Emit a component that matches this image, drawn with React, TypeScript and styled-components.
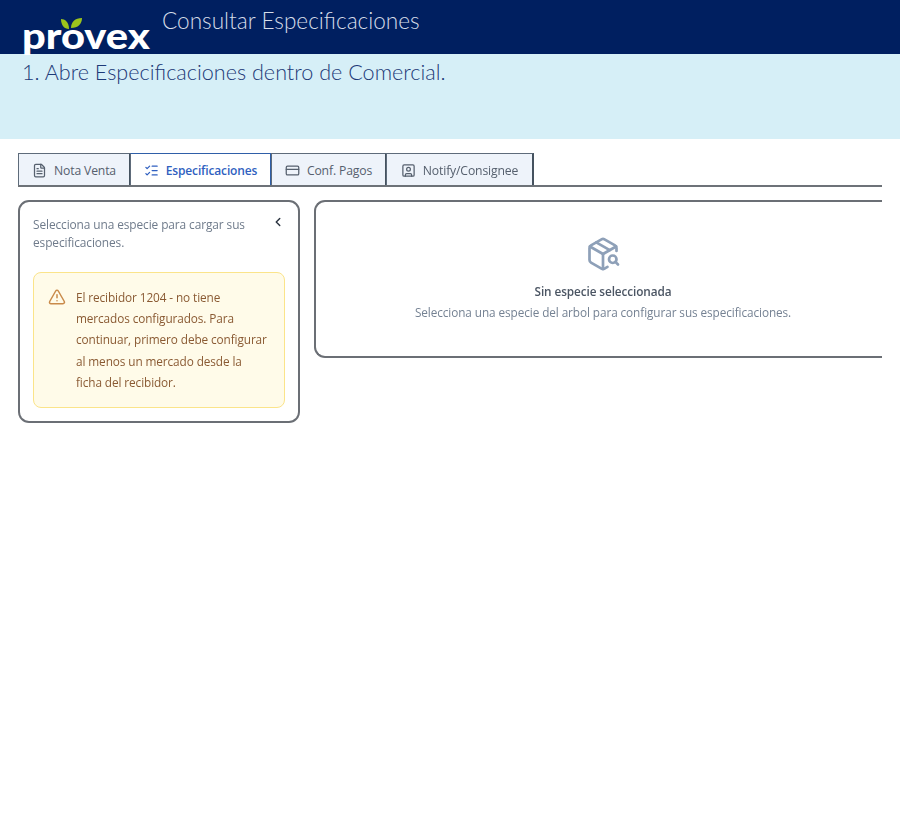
import React from "react";
import styled, { createGlobalStyle } from "styled-components";
import { ChevronLeft, CreditCard, FileText, ListChecks, PackageSearch, SquareUser, TriangleAlert } from "lucide-react";

const Global = createGlobalStyle`
  html, body { margin: 0; padding: 0; background: #fff; }
  #root { width: 900px; min-height: 828px; }
`;
const Page = styled.div`width: 900px; height: 828px; background: #fff; overflow: hidden;`;
const Header = styled.header`
  height: 54px; background: #001f60; display: flex; padding-left: 23px; box-sizing: border-box;
`;
const Logo = styled.div`position: relative; width: 127px; height: 54px; margin-right: 12px; flex: none;`;
const LogoWord = styled.span`
  position: absolute; left: -1px; top: 13px;
  font: 900 36px/44px "Lato", sans-serif; color: #fff; transform: scaleX(1.155); transform-origin: left;
`;
const Leaves = styled.svg`position: absolute; left: 38px; top: 17px;`;
const Title = styled.h1`
  margin: 6px 0 0; font: 300 22.6px/30px "Lato", sans-serif; color: #d5dce9;
`;
const Band = styled.section`height: 85px; background: #d6eff7; padding: 4px 0 0 22px; box-sizing: border-box;`;
const Step = styled.p`margin: 0; font: 300 21.6px/29px "Lato", sans-serif; color: #1d3a78;`;
const Shot = styled.main`
  width: 864px; margin: 14px 0 0 18px; overflow: hidden; filter: blur(0.4px);
  font-family: "Open Sans", sans-serif;
`;
const Tabs = styled.nav`display: flex; height: 34px; border-bottom: 2px solid #6d7278; box-sizing: border-box;`;
const Tab = styled.div<{ $active?: boolean; $w: number }>`
  width: ${p => p.$w}px; box-sizing: border-box; display: flex; align-items: center; justify-content: center; gap: 7px;
  padding-top: 1px;
  background: ${p => (p.$active ? "#fff" : "#eef3fa")};
  border-top: 1px solid ${p => (p.$active ? "#2f5fa8" : "#5e6b7a")};
  border-left: 1px solid #5e6b7a;
  border-right: 2px solid ${p => (p.$active ? "#2f5fa8" : "#45525f")};
  margin-right: -1px;
  color: ${p => (p.$active ? "#2f5fc0" : "#56606e")};
  font-size: ${p => (p.$active ? 12 : 12.2)}px; font-weight: ${p => (p.$active ? 600 : 500)}; letter-spacing: -0.15px;
  svg { flex: none; }
`;
const Panels = styled.div`display: flex; align-items: flex-start; gap: 14px; margin-top: 13px;`;
const Side = styled.aside`
  width: 282px; height: 223px; flex: none; box-sizing: border-box; padding: 13px 13px;
  border: 2px solid #6b6f75; border-radius: 11px; background: #fff;
`;
const SideHead = styled.div`display: flex; justify-content: space-between; align-items: flex-start; height: 57px;`;
const Hint = styled.p`margin: 0; width: 225px; font-size: 11.9px; line-height: 18px; color: #6f7b8b; letter-spacing: -0.1px;`;
const Back = styled(ChevronLeft)`color: #2b3440; position: relative; top: 0; right: 0;`;
const Alert = styled.div`
  box-sizing: border-box; width: 252px; height: 136px; display: flex; gap: 10px; padding: 14px 15px 14px 14px;
  background: #fffbe9; border: 1.5px solid #fbe48a; border-radius: 8px;
  svg { flex: none; margin-top: 1px; color: #c98a4a; }
`;
const AlertText = styled.p`margin: 0; font-size: 11.8px; line-height: 21.2px; color: #8a5a33; letter-spacing: -0.1px;`;
const Main = styled.section`
  width: 640px; height: 158px; flex: none; box-sizing: border-box; padding-top: 34px;
  border: 2px solid #6b6f75; border-right: 0; border-radius: 11px 0 0 11px; background: #fff;
  margin-right: -100px;
`;
const Empty = styled.div`width: 574px; display: flex; flex-direction: column; align-items: center;`;
const EmptyTitle = styled.h2`margin: 10px 0 0; font-size: 11.8px; line-height: 18px; font-weight: 600; color: #4b5563; letter-spacing: -0.1px;`;
const EmptyText = styled.p`margin: 3px 0 0; font-size: 11.77px; line-height: 18px; color: #758293; letter-spacing: -0.08px;`;

export default function App() {
  return (
    <Page>
      <Global />
      <Header>
        <Logo>
          <LogoWord>provex</LogoWord>
          <Leaves width="24" height="14" viewBox="0 0 24 14">
            <path d="M0 2c4 0 8 3 8 10C3 12 0 8 0 2z" fill="#9bc31c" />
            <path d="M10 11C10 5 14 1 21 1c0 6-4 10-11 10z" fill="#9bc31c" />
          </Leaves>
        </Logo>
        <Title>Consultar Especificaciones</Title>
      </Header>
      <Band>
        <Step>1. Abre Especificaciones dentro de Comercial.</Step>
      </Band>
      <Shot>
        <Tabs>
          <Tab $w={113}><FileText size={15} />Nota Venta</Tab>
          <Tab $w={142} $active><ListChecks size={15} />Especificaciones</Tab>
          <Tab $w={116}><CreditCard size={15} />Conf. Pagos</Tab>
          <Tab $w={148}><SquareUser size={15} />Notify/Consignee</Tab>
        </Tabs>
        <Panels>
          <Side>
            <SideHead>
              <Hint>Selecciona una especie para cargar sus especificaciones.</Hint>
              <Back size={14} strokeWidth={2.5} />
            </SideHead>
            <Alert>
              <TriangleAlert size={18} />
              <AlertText>El recibidor 1204 - no tiene mercados configurados. Para continuar, primero debe configurar al menos un mercado desde la ficha del recibidor.</AlertText>
            </Alert>
          </Side>
          <Main>
            <Empty>
              <PackageSearch size={36} strokeWidth={1.8} color="#8ea0b8" />
              <EmptyTitle>Sin especie seleccionada</EmptyTitle>
              <EmptyText>Selecciona una especie del arbol para configurar sus especificaciones.</EmptyText>
            </Empty>
          </Main>
        </Panels>
      </Shot>
    </Page>
  );
}
